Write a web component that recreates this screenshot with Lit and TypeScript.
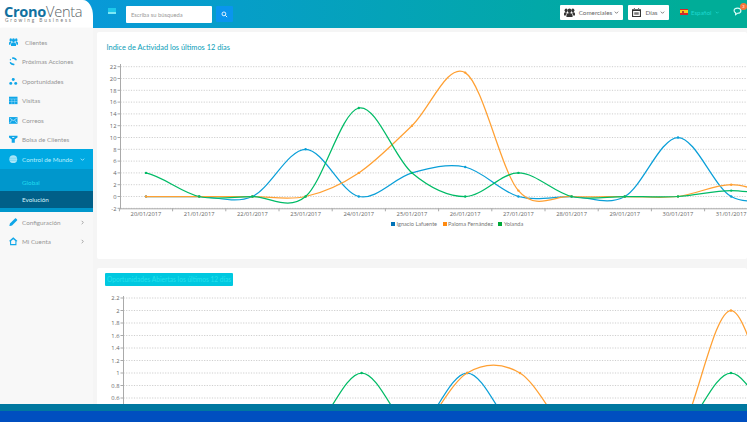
import { LitElement, css, html, svg } from 'lit';
import { customElement, property } from 'lit/decorators.js';

const BLUE = '#0a9fd8';
const ORANGE = '#ffa033';
const GREEN = '#00bb66';

interface Series {
  color: string;
  values: number[];
}

// catmull-rom through the points, one extra point past each end
function splinePath(xs: number[], ys: number[]): string {
  let d = `M${xs[0]} ${ys[0]}`;
  for (let i = 0; i < xs.length - 1; i++) {
    const y0 = ys[Math.max(i - 1, 0)];
    const y3 = ys[Math.min(i + 2, ys.length - 1)];
    const c1 = ys[i] + (ys[i + 1] - y0) / 6;
    const c2 = ys[i + 1] - (y3 - ys[i]) / 6;
    const dx = (xs[i + 1] - xs[i]) / 3;
    d += ` C${xs[i] + dx} ${c1} ${xs[i + 1] - dx} ${c2} ${xs[i + 1]} ${ys[i + 1]}`;
  }
  return d;
}

@customElement('line-chart')
export class LineChart extends LitElement {
  @property({ type: Array }) series: Series[] = [];
  @property({ type: Array }) ticks: { label: string; y: number }[] = [];
  @property({ type: Number }) axisX = 0;
  @property({ type: Number }) firstX = 0;
  @property({ type: Number }) step = 53.2;
  @property({ type: Number }) zeroY = 0;
  @property({ type: Number }) unit = 1;
  @property({ type: Number }) axisTop = 0;
  @property({ type: Number }) axisBottom = 0;
  @property({ type: Number }) height = 200;
  @property({ type: Array }) dates: string[] = [];

  render() {
    const xAt = (i: number) => this.firstX + i * this.step;
    const bottom = this.ticks[this.ticks.length - 1].y;
    return html`<svg width="650" height=${this.height} viewBox="0 0 650 ${this.height}">
      ${this.ticks.map(
        (t) => svg`
          <line class="grid" x1=${this.axisX} x2="650" y1=${t.y} y2=${t.y}></line>
          <line class="axis" x1=${this.axisX - 3} x2=${this.axisX} y1=${t.y} y2=${t.y}></line>
          <text class="tick" x=${this.axisX - 4} y=${t.y + 2.2} text-anchor="end">${t.label}</text>`
      )}
      <line class="axis" x1=${this.axisX} x2=${this.axisX} y1=${this.axisTop} y2=${this.axisBottom || bottom + 1}></line>
      ${this.dates.length
        ? svg`<line class="axis" x1=${this.axisX} x2="650" y1=${bottom + 0.5} y2=${bottom + 0.5}></line>`
        : ''}
      ${this.dates.map(
        (d, i) => svg`
          <line class="axis" x1=${xAt(i) - this.step / 2} x2=${xAt(i) - this.step / 2} y1=${bottom} y2=${bottom + 3}></line>
          <text class="tick" x=${xAt(i)} y=${bottom + 8} text-anchor="middle">${d}</text>`
      )}
      ${this.series.map((s) => {
        const xs = s.values.map((_, i) => xAt(i));
        const ys = s.values.map((v) => this.zeroY - v * this.unit);
        return svg`
          <path d=${splinePath(xs, ys)} fill="none" stroke=${s.color} stroke-width="1.25"></path>
          ${xs.map((x, i) => svg`<circle cx=${x} cy=${ys[i]} r="1.2" fill=${s.color}></circle>`)}`;
      })}
    </svg>`;
  }

  static styles = css`
    :host {
      display: block;
    }
    svg {
      display: block;
    }
    .grid {
      stroke: #cfcfcf;
      stroke-width: 1;
      stroke-dasharray: 1.2 1.4;
    }
    .axis {
      stroke: #aaa;
      stroke-width: 1;
    }
    .tick {
      font-family: 'Open Sans', sans-serif;
      font-size: 5.8px;
      fill: #666;
    }
  `;
}

const icons: Record<string, unknown> = {
  people: html`<svg viewBox="0 0 18 12" preserveAspectRatio="none"><circle cx="9" cy="3.500" r="3"/><circle cx="3.500" cy="3" r="2.500"/><circle cx="14.500" cy="3" r="2.500"/><path d="M4 12V9.500C4 7.500 6.500 6.500 9 6.500s5 1 5 3V12zM0 10V7.500C0 6 1.500 5.500 3.500 5.500l1.500 1C3.500 7.500 3 8.500 3 10zM18 10V7.500C18 6 16.500 5.500 14.500 5.500l-1.500 1c1.500 1 2 2 2 3.500z"/></svg>`,
  sync: html`<svg viewBox="0 0 12 12" fill="none" stroke="#0fa6e8" stroke-width="2"><path d="M4.500 1.800A4.500 4.500 0 0 1 10.300 4.700"/><path d="M7.500 10.200A4.500 4.500 0 0 1 1.700 7.300"/><path d="M1.500 4.500 2.500 3" stroke-width="1.500"/></svg>`,
  dots: html`<svg viewBox="0 0 12 12"><circle cx="6" cy="3.500" r="2.100"/><circle cx="2.500" cy="9" r="2.100"/><circle cx="9.500" cy="9" r="2.100"/></svg>`,
  calendar: html`<svg viewBox="0 0 12 12"><path d="M0 1h12v10.500H0z"/><path d="M0 4.200h12M4 4.200v7.300M8 4.200v7.300M0 7.800h12" stroke="#bfe9fa" stroke-width=".6"/></svg>`,
  mail: html`<svg viewBox="0 0 12 12"><path d="M0 1.500h12V11H0z"/><path d="M1 3 6 6.500 11 3M1 9.800 4 6M11 9.800 8 6" fill="none" stroke="#e4f6fd" stroke-width=".9"/></svg>`,
  funnel: html`<svg viewBox="0 0 12 12"><path d="M0 1h12v2.500L8.500 6H8.200v5H3.800V6H3.500L0 3.500z"/><path d="M4.500 3h3v1.200h-3z" fill="#f8f8f8"/></svg>`,
  globe: html`<svg viewBox="0 0 12 12"><circle cx="6" cy="6" r="5.500"/><path d="M1 4.500h10M1 7.500h10" fill="none" stroke="#2cbcea" stroke-width=".5"/></svg>`,
  pencil: html`<svg viewBox="0 0 12 12"><path d="M.5 11.500l.8-3.800L8.500.7c.5-.5 1-.5 1.500 0l1.300 1.300c.5.500.5 1 0 1.500L4.300 10.700z"/></svg>`,
  home: html`<svg viewBox="0 0 12 12"><path fill-rule="evenodd" d="M6 .5 12 5.500 10.500 6.200V11.500h-9V6.200L0 5.500zM3 5.800v4.200h6V5.800L6 3.200z"/></svg>`,
  searchIcon: html`<svg viewBox="0 0 12 12" fill="none" stroke="#fff" stroke-width="1.500"><circle cx="5" cy="5" r="3.300"/><path d="M7.500 7.500 10.500 10.500"/></svg>`,
  calDark: html`<svg viewBox="0 0 12 12"><path fill-rule="evenodd" d="M0 1.500h12V12H0zM1.500 4v6.500h9V4z"/><path d="M2.500 0h1.500v2.500H2.500zM8 0h1.500v2.500H8zM3 5.500h6v3.500H3z" fill="#777"/></svg>`,
  chat: html`<svg viewBox="0 0 12 12" fill="none" stroke="#d8fbf6" stroke-width="1.600"><path d="M6 1.500c2.800 0 4.500 1.400 4.500 3.400S8.800 8.300 6 8.300L3.500 10V7.800C2.200 7.200 1.500 6.200 1.500 4.900 1.500 2.900 3.200 1.500 6 1.500z"/></svg>`,
};

const chevronDown = html`<svg class="chev" viewBox="0 0 6 6"><path d="M1 2l2 2 2-2" fill="none" stroke="currentColor"/></svg>`;
const chevronRight = html`<svg class="chev" viewBox="0 0 6 6"><path d="M2 1l2 2-2 2" fill="none" stroke="currentColor"/></svg>`;

const menu = [
  { label: 'Clientes', icon: 'people', wide: true },
  { label: 'Próximas Acciones', icon: 'sync' },
  { label: 'Oportunidades', icon: 'dots' },
  { label: 'Visitas', icon: 'calendar' },
  { label: 'Correos', icon: 'mail' },
  { label: 'Bolsa de Clientes', icon: 'funnel' },
];

const DATES = ['20', '21', '22', '23', '24', '25', '26', '27', '28', '29', '30', '31'].map((d) => `${d}/01/2017`);

// card origin is x 97, charts measure from there
const activityTicks = [22, 20, 18, 16, 14, 12, 10, 8, 6, 4, 2, 0, -2].map((v) => ({
  label: String(v),
  y: 196.5 - v * 5.9 - 58,
}));

const activity: Series[] = [
  { color: BLUE, values: [0, 0, 0, 8, 0, 4, 5, 0, 0, 0, 10, 0, 0] },
  { color: ORANGE, values: [0, 0, 0, 0, 4, 12, 21, 1, 0, 0, 0, 2, 0] },
  { color: GREEN, values: [4, 0, 0, 0, 15, 4, 0, 4, 0, 0, 0, 1, 0] },
];

// the rest of this axis is below the fold
const openTicks = ['2.2', '2', '1.8', '1.6', '1.4', '1.2', '1', '0.8', '0.6'].map((l) => ({
  label: l,
  y: 435.5 - parseFloat(l) * 62.5 - 292,
}));

const open: Series[] = [
  { color: BLUE, values: [0, 0, 0, 0, 0, 0, 1, 0, 0, 0, 0, 0, 0] },
  { color: ORANGE, values: [0, 0, 0, 0, 0, 0, 1, 1, 0, 0, 0, 2, 0] },
  { color: GREEN, values: [0, 0, 0, 0, 1, 0, 0, 0, 0, 0, 0, 1, 0] },
];

@customElement('app-root')
export class AppRoot extends LitElement {
  render() {
    return html`
      <div class="top">
        <aside class="sidebar">
          <div class="logo">
            <div class="logo-name"><b>Crono</b><span>Venta</span></div>
            <div class="logo-sub">Growing Business</div>
          </div>
          <nav>
            ${menu.map(
              (m) => html`<div class="item">
                <span class="ico ${m.wide ? 'wide' : ''}">${icons[m.icon]}</span>${m.label}
              </div>`
            )}
            <div class="group">
              <div class="group-head">
                <span class="ico">${icons.globe}</span>Control de Mundo<span class="arrow">${chevronDown}</span>
              </div>
              <div class="sub">Global</div>
              <div class="sub current">Evolución</div>
            </div>
            <div class="item">
              <span class="ico">${icons.pencil}</span>Configuración<span class="arrow">${chevronRight}</span>
            </div>
            <div class="item">
              <span class="ico">${icons.home}</span>Mi Cuenta<span class="arrow">${chevronRight}</span>
            </div>
          </nav>
        </aside>
        <div class="right">
          <header>
            <div class="burger"><i></i><i></i><i></i></div>
            <div class="search">Escriba su búsqueda</div>
            <div class="search-btn">${icons.searchIcon}</div>
            <div class="spacer"></div>
            <div class="btn comerciales"><span class="btn-ico people">${icons.people}</span>Comerciales${chevronDown}</div>
            <div class="btn dias"><span class="btn-ico">${icons.calDark}</span>Días${chevronDown}</div>
            <div class="lang"><span class="flag"><i></i></span>Español${chevronDown}</div>
            <div class="chat">${icons.chat}<span class="badge">3</span></div>
          </header>
          <main>
            <section class="card first">
              <h2>Indice de Actividad los últimos 12 días</h2>
              <line-chart
                .series=${activity}
                .ticks=${activityTicks}
                .dates=${DATES}
                .axisX=${23.5}
                .firstX=${49}
                .step=${53.2}
                .zeroY=${138.5}
                .unit=${5.9}
                .axisTop=${6}
                .height=${162}
              ></line-chart>
              <div class="legend">
                <span><i style="background:#0073b8"></i>Ignacio Lafuente</span>
                <span><i style="background:#ff8a10"></i>Paloma Fernández</span>
                <span><i style="background:#00a838"></i>Yolanda</span>
              </div>
            </section>
            <section class="card second">
              <h2 class="pill">Oportunidades Abiertas los últimos 12 días</h2>
              <line-chart
                .series=${open}
                .ticks=${openTicks}
                .axisX=${26.5}
                .firstX=${53.6}
                .step=${52.76}
                .zeroY=${143.5}
                .unit=${62.5}
                .axisTop=${4}
                .axisBottom=${120}
                .height=${150}
              ></line-chart>
            </section>
          </main>
        </div>
      </div>
      <footer><div class="band-a"></div><div class="band-b"></div></footer>
    `;
  }

  static styles = css`
    :host {
      display: flex;
      flex-direction: column;
      width: 747px;
      height: 422px;
      overflow: hidden;
      font-family: Lato, 'Noto Sans', sans-serif;
    }
    .top {
      flex: 1;
      min-height: 0;
      display: flex;
      background: linear-gradient(90deg, #0899d8 12%, #00ad98 92%) top / 100% 28px no-repeat, #f5f5f5;
    }
    .sidebar {
      width: 93px;
      flex: none;
      display: flex;
      flex-direction: column;
    }
    .logo {
      height: 28px;
      background: #fff;
      border-top-right-radius: 10px 16px;
      padding: 4.500px 0 0 4px;
      box-sizing: border-box;
      color: #555;
    }
    .logo-name {
      font-size: 14.6px;
      line-height: 13px;
      letter-spacing: -0.3px;
      white-space: nowrap;
      font-family: 'Open Sans', sans-serif;
    }
    .logo-name b {
      color: #12719f;
      font-weight: 700;
    }
    .logo-name span {
      font-weight: 300;
      color: #5a6468;
    }
    .logo-sub {
      font-size: 4.8px;
      letter-spacing: 1.9px;
      color: #777;
      line-height: 5px;
      margin-top: 0.500px;
      white-space: nowrap;
      padding-left: 1px;
    }
    nav {
      flex: 1;
      background: #f8f8f8;
      padding-top: 4.250px;
      box-shadow: 1px 0 2px rgba(0, 0, 0, 0.04);
    }
    .item,
    .group-head {
      height: 19.5px;
      display: flex;
      align-items: center;
      font-size: 6.3px;
      color: #969696;
      padding-left: 9px;
      white-space: nowrap;
    }
    .ico {
      width: 13px;
      display: inline-flex;
      flex: none;
    }
    .ico.wide {
      width: 16px;
    }
    .ico svg {
      width: 8.500px;
      height: 8.500px;
      fill: #0fa6e8;
    }
    .ico.wide svg {
      width: 9px;
      height: 8px;
    }
    .arrow {
      margin-left: auto;
      margin-right: 8px;
      display: inline-flex;
    }
    .chev {
      width: 5px;
      height: 5px;
    }
    .group {
      background: #0097cc;
      padding-bottom: 4px;
    }
    .group-head {
      background: #00a9e2;
      color: #b9eefc;
    }
    .group-head .ico svg {
      fill: #a8e6f8;
    }
    .sub {
      height: 22px;
      padding-top: 5px;
      box-sizing: border-box;
      display: flex;
      align-items: center;
      padding-left: 22px;
      font-size: 6.3px;
      color: #21dbef;
    }
    .sub.current {
      height: 17.500px;
      padding-top: 0;
      background: #005f88;
      color: #d5f3fa;
    }
    .right {
      flex: 1;
      min-width: 0;
      display: flex;
      flex-direction: column;
    }
    header {
      height: 28px;
      flex: none;
      display: flex;
      align-items: center;
      font-size: 6.300px;
      color: #666;
      white-space: nowrap;
    }
    .burger {
      margin: 0 0 6px 15px;
      width: 7.500px;
      display: grid;
      gap: 0.600px;
    }
    .burger i {
      height: 1.700px;
      background: #1ec8ea;
    }
    .burger i:last-child {
      background: #7ee8f5;
    }
    .search {
      margin: 0 0 0 10.500px;
      width: 86px;
      height: 17px;
      background: #fff;
      border-radius: 1px;
      box-sizing: border-box;
      padding-left: 5px;
      display: flex;
      align-items: center;
      font-size: 5.800px;
      color: #999;
    }
    .search-btn {
      width: 17px;
      height: 16px;
      margin-left: 3.500px;
      background: #0a95ee;
      border-radius: 1px;
      display: flex;
      align-items: center;
      justify-content: center;
    }
    .search-btn svg {
      width: 7px;
      height: 7px;
    }
    .spacer {
      flex: 1;
    }
    .btn {
      height: 15px;
      background: #fff;
      display: flex;
      align-items: center;
      justify-content: center;
      gap: 2px;
      margin-bottom: 4px;
      box-sizing: border-box;
      border-radius: 1px;
    }
    .comerciales {
      width: 63px;
    }
    .dias {
      width: 41px;
      margin-left: 5px;
    }
    .btn-ico {
      display: inline-flex;
      margin-right: 2px;
    }
    .btn-ico svg {
      width: 9px;
      height: 9px;
      fill: #333;
    }
    .btn-ico.people svg {
      width: 11px;
    }
    .lang {
      width: 39px;
      margin: 0 0 4px 11px;
      display: flex;
      align-items: center;
      gap: 2px;
      color: #1fd8d0;
      font-size: 6px;
    }
    .flag {
      width: 8px;
      height: 6px;
      flex: none;
      margin-right: 1px;
      background: linear-gradient(#d9252a 25%, #f8cc1c 25% 75%, #d9252a 75%);
      display: inline-flex;
    }
    .flag i {
      width: 2px;
      height: 2px;
      margin: 2px 0 0 1.500px;
      background: #b5482a;
    }
    .lang .chev {
      margin-left: 1px;
    }
    .chat {
      margin: 0 5px 6px 14px;
      width: 9px;
      height: 9px;
      position: relative;
      display: flex;
    }
    .chat svg {
      width: 9px;
      height: 9px;
    }
    .badge {
      position: absolute;
      top: -4px;
      right: -5px;
      width: 7px;
      height: 7px;
      border-radius: 50%;
      background: #f9743a;
      color: #fff;
      font-size: 4px;
      line-height: 7px;
      text-align: center;
    }
    main {
      flex: 1;
      min-height: 0;
      overflow: hidden;
      background: #f5f5f5;
      padding: 4px 0 0 4px;
    }
    .card {
      background: #fff;
      border-radius: 2px;
      box-sizing: border-box;
    }
    .first {
      height: 227px;
    }
    .second {
      height: 200px;
      margin-top: 9px;
      padding-top: 5px;
    }
    h2 {
      margin: 0;
      font-weight: 400;
      font-size: 7.400px;
      color: #0a9db8;
      padding: 10px 0 0 9.500px;
      height: 26px;
      box-sizing: border-box;
      line-height: 11px;
    }
    .pill {
      margin: 0 0 6px 8px;
      padding: 0 0 0 2px;
      width: 128px;
      height: 13px;
      line-height: 13px;
      background: #00c8e0;
      color: #27e0ec;
      border-radius: 1px;
      white-space: nowrap;
      font-size: 6.600px;
    }
    .legend {
      display: flex;
      gap: 5.500px;
      padding-left: 294px;
      font-size: 5.600px;
      line-height: 7px;
      color: #777;
    }
    .legend span {
      display: flex;
      align-items: center;
      gap: 1.500px;
      white-space: nowrap;
    }
    .legend i {
      width: 4px;
      height: 4px;
    }
    footer {
      flex: none;
    }
    .band-a {
      height: 7px;
      background: #0078a0;
    }
    .band-b {
      height: 11px;
      background: #004fc0;
    }
  `;
}
